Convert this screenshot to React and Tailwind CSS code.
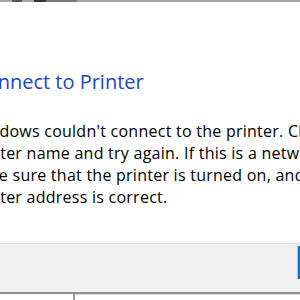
import React from "react";

const font = { fontFamily: '"Open Sans", "Noto Sans", sans-serif' };

const lines = [
  { text: "Windows couldn't connect to the printer. Check the", ml: "ml-[-30px]" },
  { text: "printer name and try again. If this is a network printer,", ml: "ml-[-31px]" },
  { text: "make sure that the printer is turned on, and that the", ml: "ml-[-34px]" },
  { text: "printer address is correct.", ml: "ml-[-31px]" },
];

function App() {
  return (
    <div
      className="w-[300px] h-[300px] overflow-hidden bg-white flex flex-col relative"
      style={font}
    >
      {/* top edge of the window */}
      <div className="h-[2px] bg-[#a6a6a6] flex">
        <div className="w-[12px]" />
        <div className="w-[10px] bg-[#555]" />
        <div className="w-[12px]" />
        <div className="w-[12px] bg-[#333]" />
        <div className="w-[31px] bg-[#7a7a7a]" />
      </div>

      <div className="h-[241px] flex flex-col pt-[66px]">
        <h1 className="ml-[-27px] whitespace-nowrap text-[20px] leading-[28px] text-[#1a47c9]">
          Connect to Printer
        </h1>
        <div className="mt-[24px] text-[16px] leading-[22px] tracking-[0.25px] text-black">
          {lines.map((l) => (
            <p key={l.text} className={`whitespace-nowrap ${l.ml}`}>
              {l.text}
            </p>
          ))}
        </div>
      </div>

      <div className="flex-1 bg-[#f0f0f0] border-t border-[#dfdfdf] flex justify-end pt-[2px]">
        <div className="w-[3px] h-[33px] bg-[#0078d7] border-l border-[#99c9ef]" />
      </div>

      <div className="h-[8px] flex flex-col">
        <div className="h-[2px] bg-[#8f8f8f]" />
        <div className="flex-1 flex">
          <div className="w-[73px] bg-white" />
          <div className="w-[2px] bg-[#9a9a9a]" />
          <div className="flex-1 flex flex-col">
            <div className="h-[1px] bg-[#dcdcdc]" />
            <div className="flex-1 bg-white" />
          </div>
        </div>
      </div>
    </div>
  );
}

export default App;
